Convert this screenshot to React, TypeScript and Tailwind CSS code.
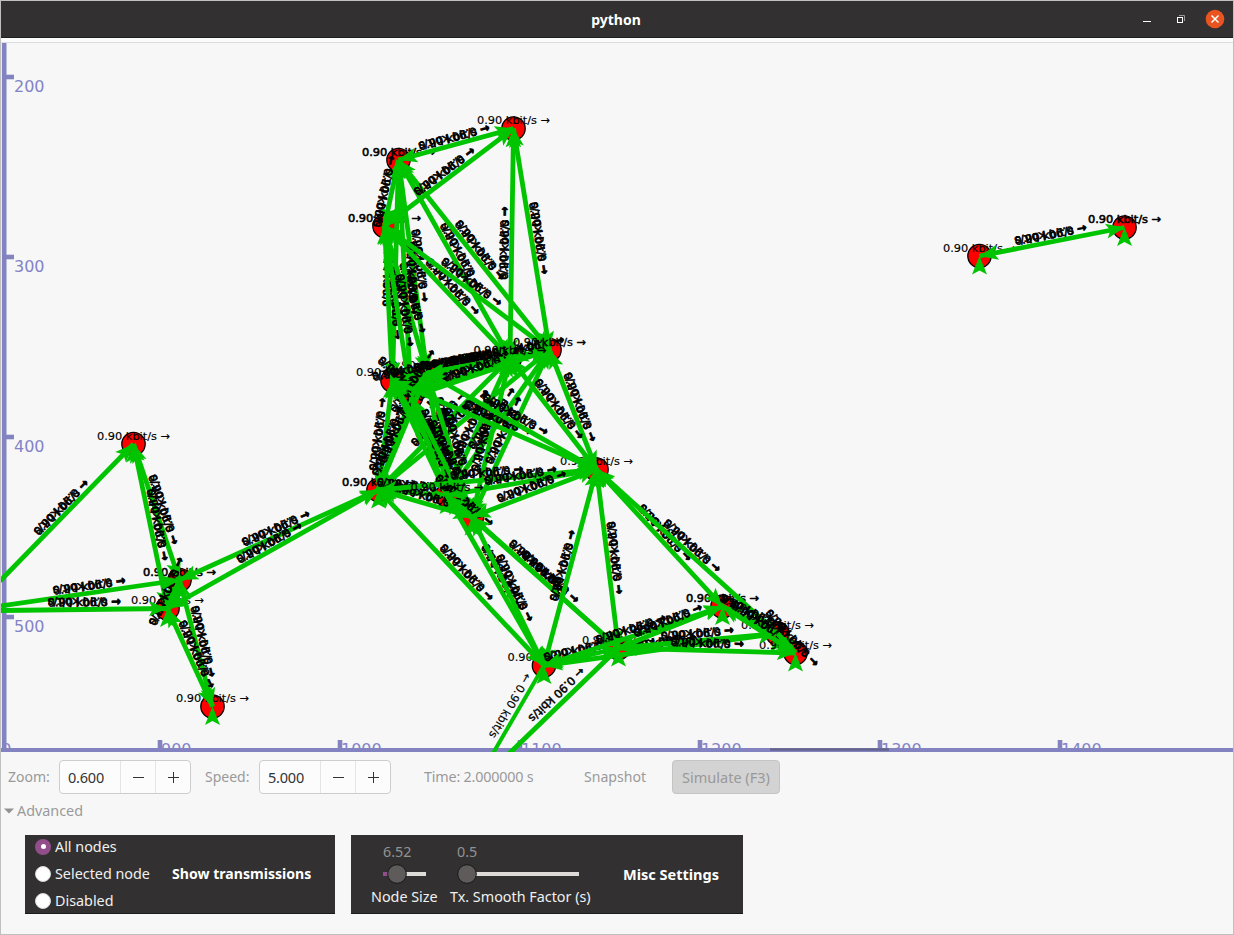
import React from "react";

type Point = { x: number; y: number };

const nodes: Record<string, Point> = {
  A: { x: 513.5, y: 128.5 },
  B: { x: 398.5, y: 160 },
  C: { x: 384.5, y: 226 },
  D: { x: 392.5, y: 380.5 },
  E: { x: 427, y: 373 },
  F: { x: 411, y: 397 },
  G: { x: 510, y: 358 },
  H: { x: 549.5, y: 350 },
  I: { x: 596.5, y: 469.5 },
  J: { x: 378.5, y: 490 },
  K: { x: 447, y: 495.5 },
  L: { x: 472, y: 517 },
  M: { x: 544, y: 665.5 },
  N: { x: 618.5, y: 648 },
  O: { x: 722.5, y: 606.5 },
  P: { x: 777.5, y: 633.5 },
  Q: { x: 795.5, y: 653 },
  R: { x: 133.5, y: 444 },
  S: { x: 179.5, y: 580 },
  T: { x: 167.5, y: 608.5 },
  U: { x: 212.5, y: 706.5 },
  V: { x: 979.5, y: 256 },
  W: { x: 1124.5, y: 227.5 },
};

const offscreen: Record<string, Point> = {
  w: { x: 0, y: 581 },
  x: { x: 1, y: 606 },
  y: { x: 1, y: 610.5 },
};

const all: Record<string, Point> = { ...nodes, ...offscreen };

const links =
  "BC BD CD BE CE BF CF DG EG FG DH EH FH DE DF EF DJ FJ EJ GJ HJ GK HK GL HL DK DL EK EL FK FL CG BG CH BH GH DI EI AG AH AB AC HI GI JK JL KL JI KI LI JM KM LM KN LN IM IN IO IP MN MO MP NO NP NQ OP OQ PQ RS RT ST SU TU wR xS yT JS JT VW".split(
    " ",
  );

const GREEN = "#00c400";

function Head({ at, angle }: { at: Point; angle: number }) {
  return (
    <polygon
      points="0,0 -18.5,-7.5 -14.5,0 -18.5,7.5"
      fill={GREEN}
      transform={`translate(${at.x} ${at.y}) rotate(${angle})`}
    />
  );
}

function Link({ a, b }: { a: Point; b: Point }) {
  const [p, q] = a.x <= b.x ? [a, b] : [b, a];
  const angle = (Math.atan2(q.y - p.y, q.x - p.x) * 180) / Math.PI;
  return (
    <g>
      <line x1={p.x} y1={p.y} x2={q.x} y2={q.y} stroke={GREEN} strokeWidth={4.8} />
      <Head at={q} angle={angle} />
      {p.x > 1 && <Head at={p} angle={angle + 180} />}
      <g
        transform={`translate(${(p.x + q.x) / 2} ${(p.y + q.y) / 2}) rotate(${angle})`}
        stroke="#000"
        strokeWidth={0.6}
      >
        <text x={0} y={-3.5} textAnchor="middle">
          0.90 kbit/s →
        </text>
        <text x={0} y={11.5} textAnchor="middle" transform="rotate(180)">
          ← 0.90 kbit/s
        </text>
      </g>
    </g>
  );
}

function OneWay({ from, to, label, width }: { from: Point; to: Point; label: Point; width: number }) {
  const angle = (Math.atan2(to.y - from.y, to.x - from.x) * 180) / Math.PI;
  return (
    <g>
      <line x1={from.x} y1={from.y} x2={to.x} y2={to.y} stroke={GREEN} strokeWidth={width} />
      <text
        x={0}
        y={4.3}
        textAnchor="middle"
        stroke="#000"
        strokeWidth={width > 4 ? 0.5 : 0.15}
        transform={`translate(${label.x} ${label.y}) rotate(${angle})`}
      >
        ← 0.90 kbit/s
      </text>
    </g>
  );
}

const doubled = ["B", "C", "J", "O", "W", "S"];
const raised = ["G", "H", "K"];
const unlabelled = ["F", "L"];

function SelfLabel({ id }: { id: string }) {
  const n = nodes[id];
  return (
    <text
      x={n.x}
      y={n.y - 4.5}
      textAnchor="middle"
      stroke="#000"
      strokeWidth={doubled.includes(id) ? 0.6 : raised.includes(id) ? 0.35 : 0.15}
    >
      0.90 kbit/s →
    </text>
  );
}

function Topology() {
  return (
    <svg
      width="1232"
      height="709"
      viewBox="1 43 1232 709"
      className="block shrink-0"
      fontFamily='"DejaVu Sans", sans-serif'
      fontSize="11.35"
    >
      {Object.entries(nodes).map(([id, n]) => (
        <circle key={id} cx={n.x} cy={n.y} r={11.7} fill="#ff0000" stroke="#000" strokeWidth={1.3} />
      ))}
      {Object.entries(nodes).map(([id, n]) => (
        <g key={id}>
          {!raised.includes(id) && !unlabelled.includes(id) && <SelfLabel id={id} />}
          <Head at={n} angle={-90} />
        </g>
      ))}
      <g>
        <path d="M4.2 43V750" stroke="#8383c2" strokeWidth="4.6" />
        {[200, 300, 400, 500].map((v, i) => (
          <g key={v}>
            <path d={`M6 ${77 + i * 180}h8`} stroke="#8383c2" strokeWidth="4.6" />
            <text x={14} y={91.7 + i * 180} fontSize="16" fill="#8383c8">
              {v}
            </text>
          </g>
        ))}
        {[800, 900, 1000, 1100, 1200, 1300, 1400].map((v, i) => (
          <g key={v}>
            <path d={`M${-20 + i * 180} 740v9`} stroke="#8383c2" strokeWidth="4.6" />
            <text x={-19 + i * 180} y={755} fontSize="16" fill="#8383c8">
              {v}
            </text>
          </g>
        ))}
        <path d="M1 750H1233" stroke="#8383c2" strokeWidth="4" />
        <path d="M770 749.5H889" stroke="#64648c" strokeWidth="2.4" />
      </g>
      <OneWay from={nodes.M} to={{ x: 490, y: 758.5 }} label={{ x: 510.5, y: 706 }} width={4} />
      <OneWay from={nodes.N} to={{ x: 505, y: 757.5 }} label={{ x: 557, y: 695 }} width={5} />
      {links.map((l) => (
        <Link key={l} a={all[l[0]]} b={all[l[1]]} />
      ))}
      {raised.map((id) => (
        <SelfLabel key={id} id={id} />
      ))}
    </svg>
  );
}

function Spin({ value }: { value: string }) {
  return (
    <div className="flex h-[34px] w-[132px] shrink-0 rounded-[4px] border border-[#cdcdcd] bg-[#fcfcfc] text-[#333]">
      <div className="flex w-[60px] items-center pb-px pl-2 text-[14.5px] tracking-[-0.2px]">{value}</div>
      <div className="flex w-[35px] items-center justify-center border-l border-[#e4e4e4]">
        <svg width="11" height="11" viewBox="0 0 11 11">
          <path d="M0 5.5h11" stroke="#333" />
        </svg>
      </div>
      <div className="flex w-[35px] items-center justify-center border-l border-[#e4e4e4]">
        <svg width="11" height="11" viewBox="0 0 11 11">
          <path d="M0 5.5h11M5.5 0v11" stroke="#333" />
        </svg>
      </div>
    </div>
  );
}

function Radio({ label, checked }: { label: string; checked?: boolean }) {
  return (
    <div className="flex h-[27px] items-center gap-1">
      <span
        className={
          checked
            ? "flex size-4 items-center justify-center rounded-full bg-[#924d8b]"
            : "size-4 rounded-full border border-[#d8d8d8] bg-white"
        }
      >
        {checked && <span className="size-[5px] rounded-full bg-white" />}
      </span>
      <span className={checked ? "" : "pt-px"}>{label}</span>
    </div>
  );
}

export default function App() {
  return (
    <div className="flex h-[935px] w-[1234px] flex-col overflow-hidden border border-[#c0c0c0] bg-[#f7f7f7] font-['Noto_Sans',sans-serif] text-[14.35px] leading-5 whitespace-nowrap text-[#9a9a9a]">
      <header className="grid h-[37px] shrink-0 grid-cols-[1fr_auto_1fr] items-center border-b border-[#201f1f] bg-[#323030] text-white">
        <span />
        <span className="pt-px pr-0.5 text-[14px] font-bold">python</span>
        <div className="flex items-center justify-end pr-[8px]">
          <svg width="85" height="20" viewBox="0 0 85 20">
            <path d="M3 12.5h8" stroke="#fff" />
            <rect x="37.5" y="8.5" width="5" height="5" fill="none" stroke="#fff" />
            <path d="M39 6.5h5.5V12" fill="none" stroke="#999" />
            <circle cx="75" cy="10" r="9.3" fill="#e95420" />
            <path d="M71.5 6.5l7 7m0-7l-7 7" stroke="#fff" strokeWidth="1.5" />
          </svg>
        </div>
      </header>
      <div className="h-[5px] shrink-0 border-b border-[#dcdcdc] bg-[#fbfbfb]" />
      <Topology />
      <div className="flex h-[50px] shrink-0 items-center pl-[7px]">
        <span className="w-[51px] text-[14px]">Zoom:</span>
        <Spin value="0.600" />
        <span className="ml-[14px] w-[54px] text-[14px]">Speed:</span>
        <Spin value="5.000" />
        <span className="ml-[33px] w-[160px] tracking-[-0.2px]">Time: 2.000000 s</span>
        <span className="w-[88px] text-[14.1px]">Snapshot</span>
        <div className="flex h-[34px] w-[108px] items-center justify-center rounded-[4px] border border-[#c4c4c4] bg-[#d3d3d3] pb-px text-[14.5px] text-[#999]">
          Simulate (F3)
        </div>
      </div>
      <div className="flex h-[18px] shrink-0 items-center gap-[3px] pl-[3px]">
        <svg width="10" height="6" viewBox="0 0 10 6">
          <path d="M0 0.5h10L5 5.5z" fill="#929292" />
        </svg>
        <span>Advanced</span>
      </div>
      <div className="mt-[15px] ml-6 flex h-[79px] shrink-0 gap-4 text-[#f0f0f0]">
        <section className="flex w-[310px] items-center border-b border-[#1b1b1b] bg-[#323030] pl-[10px]">
          <div className="-mt-px w-[137px]">
            <Radio label="All nodes" checked />
            <Radio label="Selected node" />
            <Radio label="Disabled" />
          </div>
          <span className="text-[14.1px] font-bold text-white">Show transmissions</span>
        </section>
        <section className="flex w-[392px] border-b border-[#1b1b1b] bg-[#323030] pl-5">
          <div className="flex w-[79px] flex-col pt-[7px]">
            <span className="pl-3 text-[#929292]">6.52</span>
            <svg width="60" height="22" viewBox="0 0 60 22" className="mt-px mb-0.5">
              <path d="M12 11h8" stroke="#924d8b" strokeWidth="4" />
              <path d="M26 11h29" stroke="#dedbd8" strokeWidth="4" />
              <circle cx="26" cy="11" r="9.3" fill="#5f5b5b" stroke="#171717" />
            </svg>
            <span>Node Size</span>
          </div>
          <div className="flex w-[173px] flex-col pt-[7px]">
            <span className="pl-[7px] text-[#929292]">0.5</span>
            <svg width="140" height="22" viewBox="0 0 140 22" className="mt-px mb-0.5">
              <path d="M17 11h112" stroke="#dedbd8" strokeWidth="4" />
              <circle cx="17" cy="11" r="9.3" fill="#5f5b5b" stroke="#171717" />
            </svg>
            <span>Tx. Smooth Factor (s)</span>
          </div>
          <span className="self-center text-[14.5px] font-bold text-white">Misc Settings</span>
        </section>
      </div>
    </div>
  );
}
